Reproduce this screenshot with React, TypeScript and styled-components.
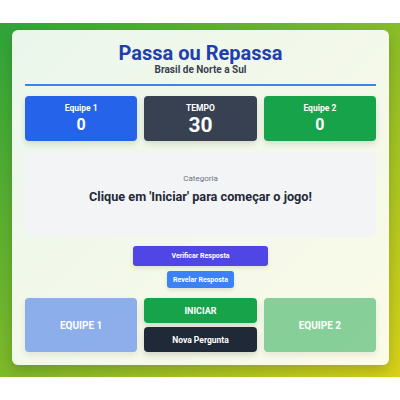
import React from "react";
import styled, { createGlobalStyle } from "styled-components";

const Global = createGlobalStyle`
  html, body { margin: 0; padding: 0; background: #ffffff; }
  body { font-family: Roboto, "Liberation Sans", Arial, sans-serif; }
  * { box-sizing: border-box; }
`;

const Page = styled.div`
  padding-top: 23px;
  width: 400px;
`;

const Backdrop = styled.div`
  height: 354px;
  background: linear-gradient(135deg, #2ea43a 0%, #d8d218 100%);
  padding: 7px 11px 12px 12px;
`;

const Card = styled.div`
  height: 335px;
  background: rgba(255, 255, 255, 0.9);
  border-radius: 6px;
  box-shadow: 0 6px 14px rgba(0, 0, 0, 0.18);
  padding: 12px 13px 13px;
  display: flex;
  flex-direction: column;
`;

const Header = styled.header`
  text-align: center;
  padding-bottom: 8px;
  border-bottom: 2px solid #3b82f6;
`;

const Title = styled.h1`
  margin: 0;
  font-size: 20px;
  line-height: 22px;
  font-weight: 700;
  color: #1e40af;
`;

const Subtitle = styled.p`
  margin: 0;
  font-size: 10px;
  line-height: 12px;
  font-weight: 700;
  color: #374151;
`;

const Row = styled.div<{ $mt: number }>`
  display: grid;
  grid-template-columns: repeat(3, 1fr);
  gap: 7px;
  margin-top: ${(p) => p.$mt}px;
`;

const ScoreBox = styled.div<{ $bg: string }>`
  height: 45px;
  border-radius: 4px;
  background: ${(p) => p.$bg};
  color: #ffffff;
  display: flex;
  flex-direction: column;
  align-items: center;
  justify-content: center;
  gap: 2px;
  box-shadow: 0 3px 6px rgba(0, 0, 0, 0.12);
`;

const ScoreLabel = styled.span`
  font-size: 8.5px;
  line-height: 10px;
  font-weight: 700;
`;

const ScoreValue = styled.span<{ $size: number }>`
  font-size: ${(p) => p.$size}px;
  line-height: 20px;
  font-weight: 700;
`;

const Question = styled.section`
  margin-top: 11px;
  height: 85px;
  background: #f3f4f6;
  border-radius: 6px;
  padding-top: 22px;
  text-align: center;
`;

const Category = styled.p`
  margin: 0;
  font-size: 8px;
  line-height: 10px;
  color: #6b7280;
`;

const QuestionText = styled.p`
  margin: 5px 0 0;
  font-size: 12.7px;
  line-height: 16px;
  font-weight: 700;
  color: #1f2937;
`;

const Actions = styled.div`
  margin-top: 9px;
  display: flex;
  flex-direction: column;
  align-items: center;
  gap: 5px;
`;

const SmallButton = styled.button<{ $bg: string; $w: number; $h: number }>`
  width: ${(p) => p.$w}px;
  height: ${(p) => p.$h}px;
  border: none;
  border-radius: 3px;
  background: ${(p) => p.$bg};
  color: #ffffff;
  font-family: Roboto, "Liberation Sans", Arial, sans-serif;
  font-size: 7px;
  font-weight: 700;
  padding: 0;
  box-shadow: 0 2px 4px rgba(0, 0, 0, 0.1);
`;

const TeamButton = styled.button<{ $bg: string }>`
  height: 54px;
  border: none;
  border-radius: 4px;
  background: ${(p) => p.$bg};
  color: #ffffff;
  font-family: Roboto, "Liberation Sans", Arial, sans-serif;
  font-size: 10px;
  font-weight: 700;
  padding: 0;
  box-shadow: 0 3px 6px rgba(0, 0, 0, 0.08);
`;

const MiddleStack = styled.div`
  display: flex;
  flex-direction: column;
  gap: 4px;
`;

const StackButton = styled.button<{ $bg: string; $size: number }>`
  height: 25px;
  border: none;
  border-radius: 4px;
  background: ${(p) => p.$bg};
  color: #ffffff;
  font-family: Roboto, "Liberation Sans", Arial, sans-serif;
  font-size: ${(p) => p.$size}px;
  font-weight: 700;
  padding: 0;
  box-shadow: 0 3px 6px rgba(0, 0, 0, 0.15);
`;

export default function App() {
  return (
    <Page>
      <Global />
      <Backdrop>
        <Card>
          <Header>
            <Title>Passa ou Repassa</Title>
            <Subtitle>Brasil de Norte a Sul</Subtitle>
          </Header>
          <Row $mt={10}>
            <ScoreBox $bg="#2563eb">
              <ScoreLabel>Equipe 1</ScoreLabel>
              <ScoreValue $size={16}>0</ScoreValue>
            </ScoreBox>
            <ScoreBox $bg="#374151">
              <ScoreLabel>TEMPO</ScoreLabel>
              <ScoreValue $size={21}>30</ScoreValue>
            </ScoreBox>
            <ScoreBox $bg="#16a34a">
              <ScoreLabel>Equipe 2</ScoreLabel>
              <ScoreValue $size={16}>0</ScoreValue>
            </ScoreBox>
          </Row>
          <Question>
            <Category>Categoria</Category>
            <QuestionText>Clique em 'Iniciar' para começar o jogo!</QuestionText>
          </Question>
          <Actions>
            <SmallButton $bg="#4f46e5" $w={135} $h={20}>Verificar Resposta</SmallButton>
            <SmallButton $bg="#3b82f6" $w={67} $h={17}>Revelar Resposta</SmallButton>
          </Actions>
          <Row $mt={10}>
            <TeamButton $bg="rgba(37, 99, 235, 0.5)">EQUIPE 1</TeamButton>
            <MiddleStack>
              <StackButton $bg="#16a34a" $size={9}>INICIAR</StackButton>
              <StackButton $bg="#1f2937" $size={8.5}>Nova Pergunta</StackButton>
            </MiddleStack>
            <TeamButton $bg="rgba(22, 163, 74, 0.5)">EQUIPE 2</TeamButton>
          </Row>
        </Card>
      </Backdrop>
    </Page>
  );
}
